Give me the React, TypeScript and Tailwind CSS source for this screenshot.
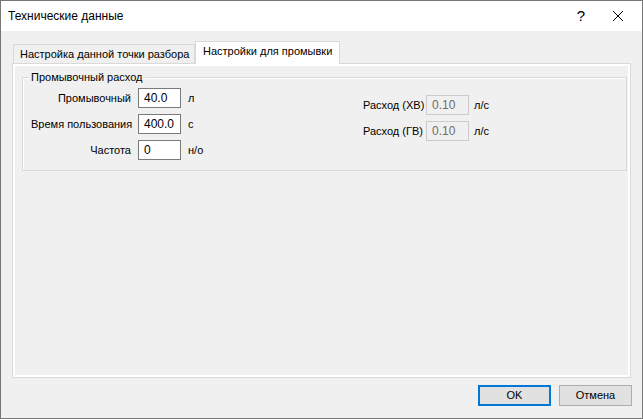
import React from "react";

const font = { fontFamily: '"Liberation Sans", Arial, sans-serif' };

function Field({ value, disabled }: { value: string; disabled?: boolean }) {
  return (
    <div
      className={
        "w-[43px] h-[20px] flex items-center pl-[5px] text-[12px] leading-none whitespace-nowrap " +
        (disabled
          ? "bg-[#f0f0f0] border border-[#cccccc] text-[#6d6d6d]"
          : "bg-white border border-[#7a7a7a] text-black")
      }
    >
      {value}
    </div>
  );
}

export default function App() {
  return (
    <div
      className="w-[643px] h-[419px] flex flex-col border border-[#777777] text-[11px] text-black overflow-hidden whitespace-nowrap"
      style={font}
    >
      <div className="h-[30px] bg-white flex items-center pl-[7px] shrink-0 text-[12px]">
        <span className="flex-1">Технические данные</span>
        <span className="w-[14px] text-[15px] mr-[24px] text-center">?</span>
        <svg width="12" height="12" viewBox="0 0 12 12" className="mr-[18px]">
          <path d="M1 1 L11 11 M11 1 L1 11" stroke="#000" strokeWidth="1" />
        </svg>
      </div>
      <div className="flex-1 bg-[#f0f0f0] flex flex-col px-[11px] pt-[10px]">
        <div className="h-[22px] flex items-end pl-[1px] relative z-10">
          <div className="h-[19px] w-[182px] border border-b-0 border-[#d9d9d9] bg-[#f0f0f0] flex items-center pl-[6px]">
            Настройка данной точки разбора
          </div>
          <div className="h-[23px] w-[145px] border border-b-0 border-[#d9d9d9] bg-white flex items-center pl-[7px] pb-[3px] mb-[-1px]">
            Настройки для промывки
          </div>
        </div>
        <div className="h-[315px] border border-[#d9d9d9] shadow-[inset_0_0_0_1px_#ffffff,inset_0_0_0_2px_#ffffff] bg-[#f0f0f0] pl-[9px] pr-[3px] pt-[13px]">
          <div className="relative border border-[#d9d9d9] shadow-[inset_1px_1px_0_0_#ffffff] h-[94px] flex pt-[10px]">
            <div className="absolute left-[6px] top-[-8px] bg-[#f0f0f0] px-[2px] leading-[14px]">
              Промывочный расход
            </div>
            <div className="grid grid-cols-[100px_43px_auto] gap-x-[7px] gap-y-[6px] items-center pl-[8px] w-[340px] self-start">
              <span className="text-right">Промывочный</span>
              <Field value="40.0" />
              <span>л</span>
              <span className="text-right">Время пользования</span>
              <Field value="400.0" />
              <span>с</span>
              <span className="text-right">Частота</span>
              <Field value="0" />
              <span>н/о</span>
            </div>
            <div className="grid grid-cols-[58px_43px_auto] gap-x-[5px] gap-y-[6px] items-center self-start pt-[7px]">
              <span className="text-right">Расход (ХВ)</span>
              <Field value="0.10" disabled />
              <span>л/с</span>
              <span className="text-right">Расход (ГВ)</span>
              <Field value="0.10" disabled />
              <span>л/с</span>
            </div>
          </div>
        </div>
        <div className="flex justify-end gap-[8px] pt-[7px]">
          <div className="w-[73px] h-[21px] border-2 border-[#0078d7] bg-[#e1e1e1] flex items-center justify-center">
            OK
          </div>
          <div className="w-[73px] h-[21px] border border-[#adadad] bg-[#e1e1e1] flex items-center justify-center mr-[-1px]">
            Отмена
          </div>
        </div>
      </div>
    </div>
  );
}
